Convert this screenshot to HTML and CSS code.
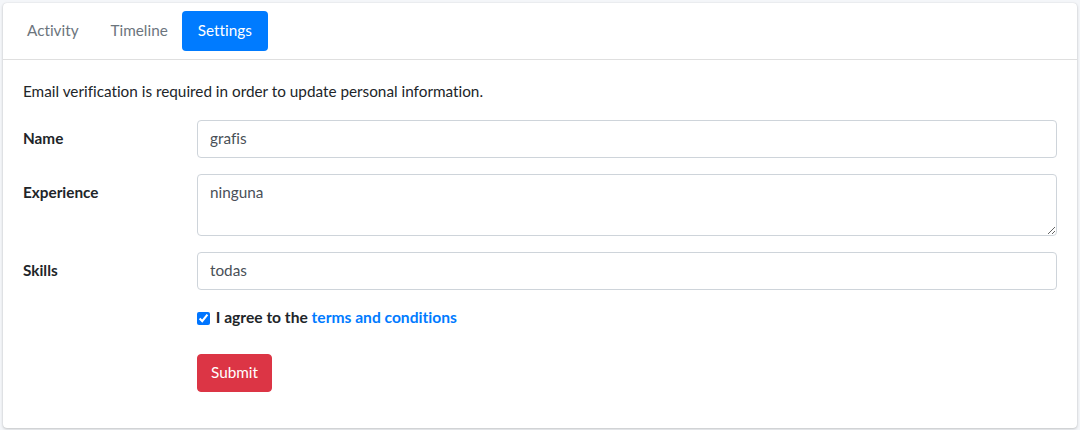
FILE: index.html
```html
<!DOCTYPE html>
<html>
<head>
<meta charset="utf-8">
<link rel="stylesheet" href="styles.css">
</head>
<body>
<div class="card">
  <div class="card-header">
    <ul class="nav">
      <li><a class="nav-link" href="#">Activity</a></li>
      <li><a class="nav-link" href="#">Timeline</a></li>
      <li><a class="nav-link active" href="#">Settings</a></li>
    </ul>
  </div>
  <div class="card-body">
    <p class="note">Email verification is required in order to update personal information.</p>
    <form class="form">
      <div class="row">
        <label class="col-label" for="name">Name</label>
        <div class="col-field"><input id="name" class="control" type="text" value="grafis"></div>
      </div>
      <div class="row">
        <label class="col-label" for="exp">Experience</label>
        <div class="col-field"><textarea id="exp" class="control area" rows="2">ninguna</textarea></div>
      </div>
      <div class="row">
        <label class="col-label" for="skills">Skills</label>
        <div class="col-field"><input id="skills" class="control" type="text" value="todas"></div>
      </div>
      <div class="row check-row">
        <div class="col-label"></div>
        <div class="col-field">
          <label class="check"><input type="checkbox" checked> I agree to the <a href="#">terms and conditions</a></label>
        </div>
      </div>
      <div class="row">
        <div class="col-label"></div>
        <div class="col-field"><button type="button" class="btn">Submit</button></div>
      </div>
    </form>
  </div>
</div>
</body>
</html>
```
FILE: styles.css
```css
html, body { margin: 0; }
body {
  background: #f4f6f9;
  padding: 3px;
  font-family: "Lato", "Noto Sans", sans-serif;
  font-size: 15.3px;
  line-height: 24px;
  color: #212529;
  font-variant-ligatures: none;
}
.card {
  background: #fff;
  border-radius: 4px;
  box-shadow: 0 0 1px rgba(0,0,0,.125), 0 1px 3px rgba(0,0,0,.2);
}
.card-header {
  padding: 8px;
  border-bottom: 1px solid rgba(0,0,0,.125);
}
.nav {
  list-style: none;
  margin: 0;
  padding: 0;
  display: flex;
}
.nav-link {
  display: block;
  padding: 7px 16px 9px;
  color: #6c757d;
  text-decoration: none;
  border-radius: 4px;
}
.nav-link.active {
  background: #007bff;
  color: #fff;
  margin-left: -2px;
  padding-left: 16px;
  padding-right: 16px;
}
.card-body { padding: 20px; }
.note { margin: 0 0 16px; position: relative; top: -1px; }
.form { margin: 0; }
.row {
  display: flex;
  margin-bottom: 16px;
}
.col-label {
  width: 174px;
  flex: none;
  font-weight: 700;
  padding-top: 6px;
  box-sizing: border-box;
}
.row .col-label:empty { padding-top: 0; }
.col-field { flex: 1; }
.control {
  display: block;
  width: 100%;
  box-sizing: border-box;
  height: 38px;
  padding: 5px 12px 7px;
  font: inherit;
  line-height: 24px;
  color: #495057;
  background: #fff;
  border: 1px solid #ced4da;
  border-radius: 4px;
  margin: 0;
  font-variant-ligatures: none;
}
.area { height: 62px; resize: vertical; }
.check-row { margin-bottom: 24px; }
.check {
  font-weight: 700;
  font-size: 15.6px;
  display: block;
  line-height: 24px;
  position: relative;
  top: -1px;
}
.check input {
  margin: 0 2px 0 0;
  width: 13px;
  height: 13px;
  vertical-align: -2px;
}
.check a {
  color: #007bff;
  text-decoration: none;
}
.btn {
  font: inherit;
  line-height: 24px;
  padding: 5px 13px 7px;
  color: #fff;
  background: #dc3545;
  border: 1px solid #dc3545;
  border-radius: 4px;
}
```
